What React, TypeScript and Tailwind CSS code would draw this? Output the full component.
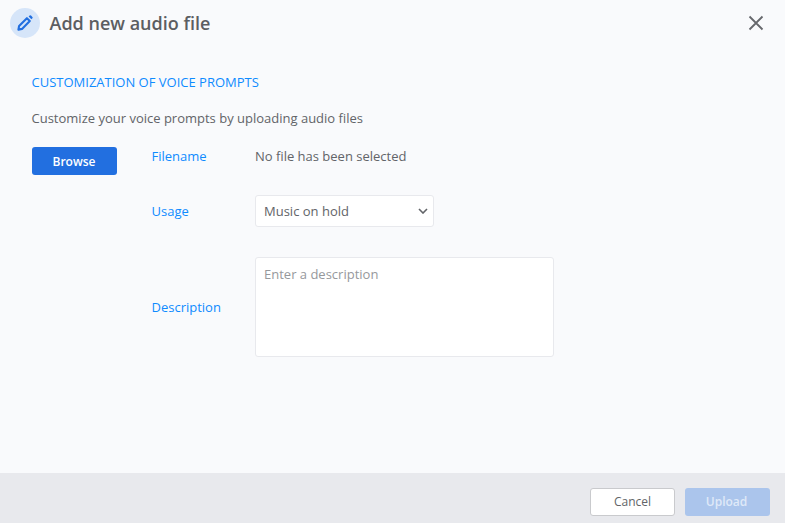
export default function App() {
  return (
    <div className="w-[785px] h-[523px] flex flex-col bg-[#f9fafc] font-['Open_Sans','Noto_Sans',sans-serif] overflow-hidden">
      <header className="h-[47px] shrink-0 flex items-center justify-between pl-[10px] pr-[21px] pb-[1px]">
        <div className="flex items-center gap-[9.5px]">
          <div className="w-[30px] h-[30px] rounded-full bg-[#d6e5f9] flex items-center justify-center">
            <svg width="18" height="18" viewBox="0 0 18 18" fill="none">
              <path d="M2.4 15.6l.7-3.6 7.8-7.8 2.9 2.9-7.8 7.8-3.6.7z" stroke="#226fe0" strokeWidth="2.1" strokeLinejoin="round" />
              <path d="M12.6 2.5l1-1a1 1 0 0 1 1.4 0l1.4 1.4a1 1 0 0 1 0 1.4l-1 1z" fill="#226fe0" />
            </svg>
          </div>
          <h1 className="text-[18px] leading-[24px] font-semibold text-[#5c5e62]">Add new audio file</h1>
        </div>
        <svg width="16" height="16" viewBox="0 0 16 16" fill="none">
          <path d="M1.5 1.5l13 13M14.5 1.5l-13 13" stroke="#66686c" strokeWidth="1.8" />
        </svg>
      </header>
      <main className="flex-1 pl-[31.5px] pr-[32px] pt-[26px]">
        <h2 className="text-[13px] leading-[18px] text-[#0f8bff]">CUSTOMIZATION OF VOICE PROMPTS</h2>
        <p className="mt-[18px] text-[13px] leading-[18px] text-[#626468]">Customize your voice prompts by uploading audio files</p>
        <div className="mt-[20px] flex">
          <button className="ml-[0.5px] w-[85px] h-[28px] rounded-[3px] bg-[#226fe0] text-white text-[12px] font-semibold leading-[30px] pr-[1px]">Browse</button>
          <div className="ml-[34.5px] flex flex-col">
            <div className="flex items-center h-[19px]">
              <span className="w-[103.5px] text-[13px] text-[#0f8bff]">Filename</span>
              <span className="text-[13px] text-[#626468]">No file has been selected</span>
            </div>
            <div className="flex items-center mt-[29px]">
              <span className="w-[103.5px] pt-[2px] text-[13px] text-[#0f8bff]">Usage</span>
              <div className="w-[179px] h-[32px] rounded-[3px] border border-[#e8e9ed] bg-white flex items-center justify-between pl-[8px] pr-[5px]">
                <span className="pt-[2px] text-[13px] text-[#626468]">Music on hold</span>
                <svg width="10" height="6" viewBox="0 0 10 6" fill="none">
                  <path d="M1 1l4 4 4-4" stroke="#626468" strokeWidth="1.6" />
                </svg>
              </div>
            </div>
            <div className="flex items-center mt-[30px]">
              <span className="w-[103.5px] pt-[2px] text-[13px] text-[#0f8bff]">Description</span>
              <div className="w-[299px] h-[100px] rounded-[3px] border border-[#e8e9ed] bg-white pl-[8px] pt-[7px]">
                <span className="block text-[13px] leading-[18px] text-[#96989c]">Enter a description</span>
              </div>
            </div>
          </div>
        </div>
      </main>
      <footer className="h-[50px] shrink-0 bg-[#e8e9ed] flex items-center justify-end gap-[10px] pr-[15px] pt-[8px]">
        <button className="w-[85px] h-[28px] rounded-[3px] bg-white border border-[#c9cacd] text-[12px] text-[#626468]">Cancel</button>
        <button className="w-[85px] h-[28px] rounded-[3px] bg-[#abc5ec] text-[12px] font-semibold text-[#dfe9f8] pr-[2px]">Upload</button>
      </footer>
    </div>
  );
}
